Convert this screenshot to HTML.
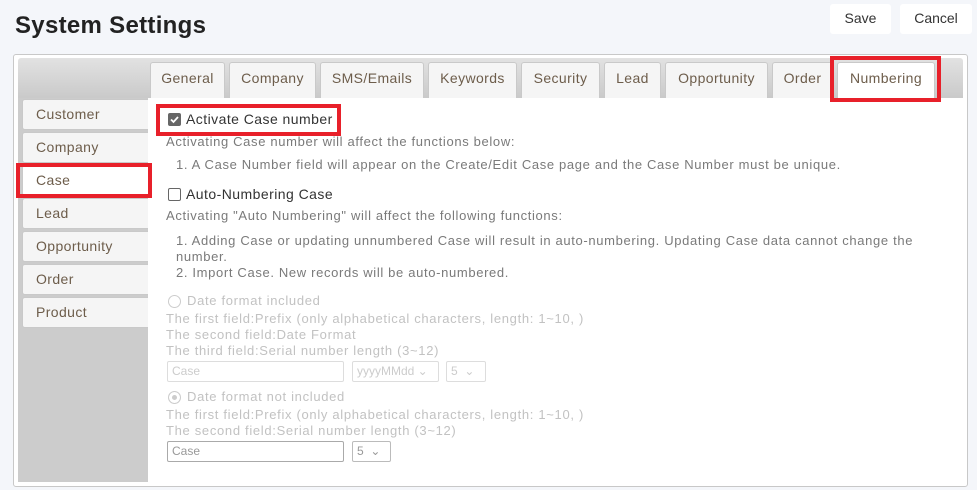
<!DOCTYPE html>
<html><head><style>
*{box-sizing:border-box;margin:0;padding:0}
body{width:977px;height:490px;background:#f4f6fa;font-family:"Liberation Sans",Arial,sans-serif;position:relative;overflow:hidden}
h1{position:absolute;left:15px;top:12px;font-size:24px;font-weight:bold;color:#222;letter-spacing:.3px}
.btn{position:absolute;top:4px;height:30px;background:#fff;border-radius:3px;font-size:14px;color:#333;text-align:center;line-height:29px}
.panel{position:absolute;left:13px;top:54px;width:955px;height:433px;background:#fff;border:1px solid #c8c8c8;border-radius:3px}
.hdr{position:absolute;left:18px;top:58px;width:945px;height:41px;background:linear-gradient(#e2e2e2,#c9c9c9);border-radius:3px 3px 0 0}
.side{position:absolute;left:18px;top:98px;width:130px;height:384px;background:#cccccc}
.content{position:absolute;left:148px;top:98px;width:815px;height:384px;background:#fff}
.tab{position:absolute;top:62px;height:36px;background:#f5f5f5;border:1px solid #c9c9c9;border-bottom:none;border-radius:3px 3px 0 0;font-size:14px;color:#6d5d4b;text-align:center;line-height:30px;letter-spacing:.4px}
.si{position:absolute;left:22px;width:126px;height:31px;background:#f5f5f5;border:1px solid #c9c9c9;border-right:none;border-radius:3px 0 0 3px;font-size:14px;color:#6d5d4b;line-height:29px;padding-left:13px;letter-spacing:.4px}
.red{position:absolute;border:4px solid #e8202a}
.t{position:absolute;white-space:nowrap;font-size:13px;color:#7a7a7a;letter-spacing:.65px}
.l{color:#c2c2c2;letter-spacing:.68px}
.cb{position:absolute;width:13px;height:13px;border:1px solid #666;border-radius:2px;background:#fff}
.rd{position:absolute;width:13px;height:13px;border:1px solid #ccc;border-radius:50%;background:#fff}
.in{position:absolute;height:21px;border:1px solid #ddd;border-radius:2px;font-size:12px;color:#ccc;padding-left:4px;line-height:19px}
</style></head><body>
<h1>System Settings</h1>
<div class="btn" style="left:830px;width:61px">Save</div>
<div class="btn" style="left:900px;width:72px">Cancel</div>
<div class="panel"></div>
<div class="hdr"></div>
<div class="side"></div>
<div class="content"></div>
<div class="tab" style="left:150px;width:75px">General</div>
<div class="tab" style="left:229px;width:87px">Company</div>
<div class="tab" style="left:320px;width:104px">SMS/Emails</div>
<div class="tab" style="left:428px;width:89px">Keywords</div>
<div class="tab" style="left:521px;width:79px">Security</div>
<div class="tab" style="left:604px;width:57px">Lead</div>
<div class="tab" style="left:665px;width:103px">Opportunity</div>
<div class="tab" style="left:772px;width:61px">Order</div>
<div class="tab" style="left:837px;width:98px;background:#fff;height:37px">Numbering</div>
<div class="red" style="left:830px;top:56px;width:111px;height:46px"></div>

<div class="si" style="top:99px">Customer</div>
<div class="si" style="top:132px">Company</div>
<div class="si" style="top:165px;background:#fff">Case</div>
<div class="si" style="top:198px">Lead</div>
<div class="si" style="top:231px">Opportunity</div>
<div class="si" style="top:264px">Order</div>
<div class="si" style="top:297px">Product</div>
<div class="red" style="left:16px;top:163px;width:136px;height:35px"></div>

<div class="red" style="left:156px;top:104px;width:185px;height:32px"></div>
<div class="cb" style="left:168px;top:113px;background:#666;border-color:#666"><svg width="11" height="11" viewBox="0 0 11 11" style="position:absolute;left:0;top:0"><path d="M2 5.5l2.5 2.5 4.5-5" stroke="#fff" stroke-width="1.8" fill="none"/></svg></div>
<div class="t" style="left:186px;top:111px;color:#333;font-size:14px;letter-spacing:.45px">Activate Case number</div>
<div class="t" style="left:166px;top:134px">Activating Case number will affect the functions below:</div>
<div class="t" style="left:176px;top:157px">1. A Case Number field will appear on the Create/Edit Case page and the Case Number must be unique.</div>
<div class="cb" style="left:168px;top:188px"></div>
<div class="t" style="left:186px;top:186px;color:#333;font-size:14px;letter-spacing:.45px">Auto-Numbering Case</div>
<div class="t" style="left:166px;top:208px">Activating "Auto Numbering" will affect the following functions:</div>
<div class="t" style="left:176px;top:233px">1. Adding Case or updating unnumbered Case will result in auto-numbering. Updating Case data cannot change the</div>
<div class="t" style="left:176px;top:249px">number.</div>
<div class="t" style="left:176px;top:265px">2. Import Case. New records will be auto-numbered.</div>

<div class="rd" style="left:168px;top:295px"></div>
<div class="t l" style="left:187px;top:293px">Date format included</div>
<div class="t l" style="left:166px;top:311px">The first field:Prefix (only alphabetical characters, length: 1~10, )</div>
<div class="t l" style="left:166px;top:327px">The second field:Date Format</div>
<div class="t l" style="left:166px;top:343px">The third field:Serial number length (3~12)</div>
<div class="in" style="left:167px;top:361px;width:177px">Case</div>
<div class="in" style="left:352px;top:361px;width:87px">yyyyMMdd ⌄</div>
<div class="in" style="left:446px;top:361px;width:40px">5 &nbsp;⌄</div>
<div class="rd" style="left:168px;top:391px;box-shadow:inset 0 0 0 3px #fff;background:#ccc"></div>
<div class="t l" style="left:187px;top:389px">Date format not included</div>
<div class="t l" style="left:166px;top:407px">The first field:Prefix (only alphabetical characters, length: 1~10, )</div>
<div class="t l" style="left:166px;top:423px">The second field:Serial number length (3~12)</div>
<div class="in" style="left:167px;top:441px;width:177px;border-color:#aaa;color:#999">Case</div>
<div class="in" style="left:352px;top:441px;width:39px;border-color:#bbb;color:#999">5 &nbsp;⌄</div>
</body></html>
